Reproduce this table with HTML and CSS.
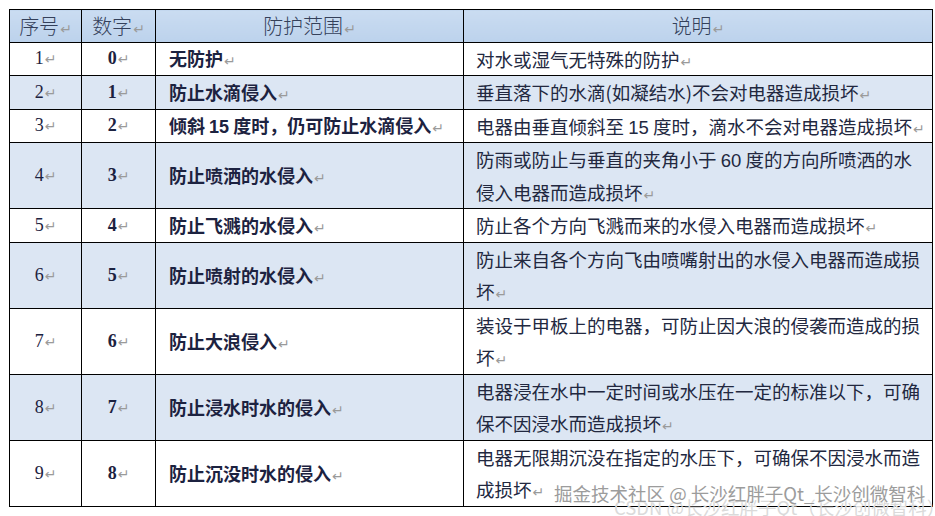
FILE: index.html
```html
<!DOCTYPE html>
<html lang="zh-CN">
<head>
<meta charset="utf-8">
<link rel="stylesheet" href="styles.css">
</head>
<body>
<div class="wrap">
<table class="ip">
<colgroup><col class="c1"><col class="c2"><col class="c3"><col class="c4"></colgroup>
<thead>
<tr class="s"><th>序号<span class="pm">↵</span></th><th>数字<span class="pm">↵</span></th><th>防护范围<span class="pm">↵</span></th><th>说明<span class="pm">↵</span></th></tr>
</thead>
<tbody>
<tr class="s1"><td class="n">1<span class="pm">↵</span></td><td class="d">0<span class="pm">↵</span></td><td class="r">无防护<span class="pm">↵</span></td><td class="e">对水或湿气无特殊的防护<span class="pm">↵</span></td></tr>
<tr class="s alt"><td class="n">2<span class="pm">↵</span></td><td class="d">1<span class="pm">↵</span></td><td class="r">防止水滴侵入<span class="pm">↵</span></td><td class="e">垂直落下的水滴(如凝结水)不会对电器造成损坏<span class="pm">↵</span></td></tr>
<tr class="s"><td class="n">3<span class="pm">↵</span></td><td class="d">2<span class="pm">↵</span></td><td class="r">倾斜 <span class="num">15</span> 度时，仍可防止水滴侵入<span class="pm">↵</span></td><td class="e">电器由垂直倾斜至 <span class="enum">15</span> 度时，滴水不会对电器造成损坏<span class="pm">↵</span></td></tr>
<tr class="dbl alt"><td class="n">4<span class="pm">↵</span></td><td class="d">3<span class="pm">↵</span></td><td class="r">防止喷洒的水侵入<span class="pm">↵</span></td><td class="e">防雨或防止与垂直的夹角小于 <span class="enum">60</span> 度的方向所喷洒的水<br>侵入电器而造成损坏<span class="pm">↵</span></td></tr>
<tr class="s"><td class="n">5<span class="pm">↵</span></td><td class="d">4<span class="pm">↵</span></td><td class="r">防止飞溅的水侵入<span class="pm">↵</span></td><td class="e">防止各个方向飞溅而来的水侵入电器而造成损坏<span class="pm">↵</span></td></tr>
<tr class="dbl alt"><td class="n">6<span class="pm">↵</span></td><td class="d">5<span class="pm">↵</span></td><td class="r">防止喷射的水侵入<span class="pm">↵</span></td><td class="e">防止来自各个方向飞由喷嘴射出的水侵入电器而造成损<br>坏<span class="pm">↵</span></td></tr>
<tr class="dbl2"><td class="n">7<span class="pm">↵</span></td><td class="d">6<span class="pm">↵</span></td><td class="r">防止大浪侵入<span class="pm">↵</span></td><td class="e">装设于甲板上的电器，可防止因大浪的侵袭而造成的损<br>坏<span class="pm">↵</span></td></tr>
<tr class="dbl alt"><td class="n">8<span class="pm">↵</span></td><td class="d">7<span class="pm">↵</span></td><td class="r">防止浸水时水的侵入<span class="pm">↵</span></td><td class="e">电器浸在水中一定时间或水压在一定的标准以下，可确<br>保不因浸水而造成损坏<span class="pm">↵</span></td></tr>
<tr class="dbl2"><td class="n">9<span class="pm">↵</span></td><td class="d">8<span class="pm">↵</span></td><td class="r">防止沉没时水的侵入<span class="pm">↵</span></td><td class="e">电器无限期沉没在指定的水压下，可确保不因浸水而造<br>成损坏<span class="pm">↵</span></td></tr>
</tbody>
</table>
<div class="wm2">CSDN @长沙红胖子Qt（长沙创微智科）</div>
<div class="wm1">掘金技术社区 @ 长沙红胖子Qt_长沙创微智科</div>
</div>
</body>
</html>
```
FILE: styles.css
```css
html, body {
  margin: 0;
  padding: 0;
  background: #ffffff;
}
body {
  width: 935px;
  height: 516px;
  overflow: hidden;
}
.wrap {
  position: relative;
  padding: 9px 0 0 9px;
}
.ip {
  border-collapse: collapse;
  table-layout: fixed;
  width: 923px;
  color: #1c2240;
}
.c1 { width: 72px; }
.c2 { width: 74px; }
.c3 { width: 308px; }
.c4 { width: 469px; }
.ip tr.s { height: 32.5px; }
.ip tr.s1 { height: 33.5px; }
.ip tr.dbl { height: 66px; }
.ip tr.dbl2 { height: 65px; }
.ip th, .ip td {
  border: 1px solid #000;
  padding: 0;
  line-height: 31px;
  vertical-align: middle;
  white-space: nowrap;
  overflow: hidden;
}
.ip th {
  background: linear-gradient(#cadcf1, #bcd2ec);
  font-family: "Noto Sans CJK SC", sans-serif;
  font-weight: 300;
  font-size: 20px;
  color: #34405a;
  text-align: center;
}
.ip tr.alt td {
  background: #dce6f3;
}
.n {
  text-align: center;
  font-family: "Liberation Serif", serif;
  font-size: 18px;
}
.d {
  text-align: center;
  font-family: "Liberation Serif", serif;
  font-weight: 700;
  font-size: 18px;
}
.r {
  padding-left: 13px !important;
  font-family: "Noto Sans CJK SC", sans-serif;
  font-weight: 700;
  font-size: 18px;
}
.num {
  font-family: "Liberation Sans", sans-serif;
  font-weight: 700;
  line-height: 0;
}
.e {
  padding-left: 12px !important;
  font-family: "Noto Sans CJK SC", sans-serif;
  font-weight: 400;
  font-size: 18.5px;
  color: #22283f;
}
.ip .e {
  line-height: 32.5px;
}
.enum {
  font-family: "Liberation Sans", sans-serif;
  line-height: 0;
}
.pm {
  font-family: "DejaVu Sans", sans-serif;
  font-size: 14px;
  font-weight: 400;
  color: #9a9a9a;
  margin-left: 1px;
  line-height: 0;
}
.wm1 {
  position: absolute;
  left: 554px;
  top: 480px;
  font-family: "Noto Sans CJK SC", sans-serif;
  font-size: 18.5px;
  line-height: 26px;
  color: #9c9c9c;
  white-space: nowrap;
  text-shadow: 0 0 2px #fff, 0 0 2px #fff;
}
.wm2 {
  position: absolute;
  left: 614px;
  top: 494px;
  font-family: "Noto Sans CJK SC", sans-serif;
  font-size: 18.5px;
  line-height: 26px;
  color: #dadada;
  white-space: nowrap;
}
```
